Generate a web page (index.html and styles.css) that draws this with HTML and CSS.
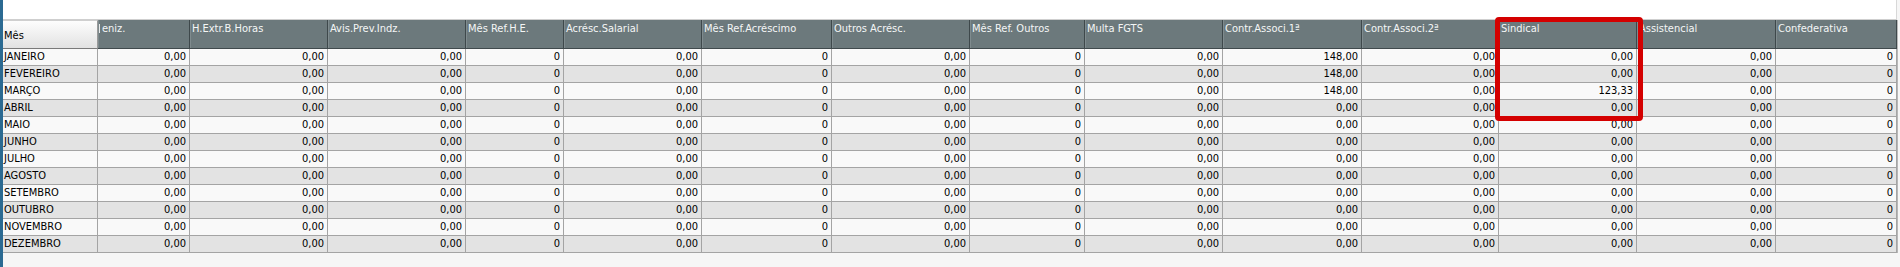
FILE: index.html
```html
<!DOCTYPE html>
<html lang="pt">
<head>
<meta charset="utf-8">
<title>Grade</title>
<link rel="stylesheet" href="styles.css">
</head>
<body>
<div class="frame">
  <div class="topbar"></div>
  <div class="grid">
    <div class="hd hd-first">Mês</div>
    <div class="hd hd-cut">eniz.</div>
    <div class="hd">H.Extr.B.Horas</div>
    <div class="hd">Avis.Prev.Indz.</div>
    <div class="hd">Mês Ref.H.E.</div>
    <div class="hd">Acrésc.Salarial</div>
    <div class="hd">Mês Ref.Acréscimo</div>
    <div class="hd">Outros Acrésc.</div>
    <div class="hd">Mês Ref. Outros</div>
    <div class="hd">Multa FGTS</div>
    <div class="hd">Contr.Associ.1ª</div>
    <div class="hd">Contr.Associ.2ª</div>
    <div class="hd">Sindical</div>
    <div class="hd">Assistencial</div>
    <div class="hd">Confederativa</div>

    <div class="c m">JANEIRO</div><div class="c">0,00</div><div class="c">0,00</div><div class="c">0,00</div><div class="c">0</div><div class="c">0,00</div><div class="c">0</div><div class="c">0,00</div><div class="c">0</div><div class="c">0,00</div><div class="c">148,00</div><div class="c">0,00</div><div class="c">0,00</div><div class="c">0,00</div><div class="c">0</div>
    <div class="c m alt">FEVEREIRO</div><div class="c alt">0,00</div><div class="c alt">0,00</div><div class="c alt">0,00</div><div class="c alt">0</div><div class="c alt">0,00</div><div class="c alt">0</div><div class="c alt">0,00</div><div class="c alt">0</div><div class="c alt">0,00</div><div class="c alt">148,00</div><div class="c alt">0,00</div><div class="c alt">0,00</div><div class="c alt">0,00</div><div class="c alt">0</div>
    <div class="c m">MARÇO</div><div class="c">0,00</div><div class="c">0,00</div><div class="c">0,00</div><div class="c">0</div><div class="c">0,00</div><div class="c">0</div><div class="c">0,00</div><div class="c">0</div><div class="c">0,00</div><div class="c">148,00</div><div class="c">0,00</div><div class="c">123,33</div><div class="c">0,00</div><div class="c">0</div>
    <div class="c m alt">ABRIL</div><div class="c alt">0,00</div><div class="c alt">0,00</div><div class="c alt">0,00</div><div class="c alt">0</div><div class="c alt">0,00</div><div class="c alt">0</div><div class="c alt">0,00</div><div class="c alt">0</div><div class="c alt">0,00</div><div class="c alt">0,00</div><div class="c alt">0,00</div><div class="c alt">0,00</div><div class="c alt">0,00</div><div class="c alt">0</div>
    <div class="c m">MAIO</div><div class="c">0,00</div><div class="c">0,00</div><div class="c">0,00</div><div class="c">0</div><div class="c">0,00</div><div class="c">0</div><div class="c">0,00</div><div class="c">0</div><div class="c">0,00</div><div class="c">0,00</div><div class="c">0,00</div><div class="c">0,00</div><div class="c">0,00</div><div class="c">0</div>
    <div class="c m alt">JUNHO</div><div class="c alt">0,00</div><div class="c alt">0,00</div><div class="c alt">0,00</div><div class="c alt">0</div><div class="c alt">0,00</div><div class="c alt">0</div><div class="c alt">0,00</div><div class="c alt">0</div><div class="c alt">0,00</div><div class="c alt">0,00</div><div class="c alt">0,00</div><div class="c alt">0,00</div><div class="c alt">0,00</div><div class="c alt">0</div>
    <div class="c m">JULHO</div><div class="c">0,00</div><div class="c">0,00</div><div class="c">0,00</div><div class="c">0</div><div class="c">0,00</div><div class="c">0</div><div class="c">0,00</div><div class="c">0</div><div class="c">0,00</div><div class="c">0,00</div><div class="c">0,00</div><div class="c">0,00</div><div class="c">0,00</div><div class="c">0</div>
    <div class="c m alt">AGOSTO</div><div class="c alt">0,00</div><div class="c alt">0,00</div><div class="c alt">0,00</div><div class="c alt">0</div><div class="c alt">0,00</div><div class="c alt">0</div><div class="c alt">0,00</div><div class="c alt">0</div><div class="c alt">0,00</div><div class="c alt">0,00</div><div class="c alt">0,00</div><div class="c alt">0,00</div><div class="c alt">0,00</div><div class="c alt">0</div>
    <div class="c m">SETEMBRO</div><div class="c">0,00</div><div class="c">0,00</div><div class="c">0,00</div><div class="c">0</div><div class="c">0,00</div><div class="c">0</div><div class="c">0,00</div><div class="c">0</div><div class="c">0,00</div><div class="c">0,00</div><div class="c">0,00</div><div class="c">0,00</div><div class="c">0,00</div><div class="c">0</div>
    <div class="c m alt">OUTUBRO</div><div class="c alt">0,00</div><div class="c alt">0,00</div><div class="c alt">0,00</div><div class="c alt">0</div><div class="c alt">0,00</div><div class="c alt">0</div><div class="c alt">0,00</div><div class="c alt">0</div><div class="c alt">0,00</div><div class="c alt">0,00</div><div class="c alt">0,00</div><div class="c alt">0,00</div><div class="c alt">0,00</div><div class="c alt">0</div>
    <div class="c m">NOVEMBRO</div><div class="c">0,00</div><div class="c">0,00</div><div class="c">0,00</div><div class="c">0</div><div class="c">0,00</div><div class="c">0</div><div class="c">0,00</div><div class="c">0</div><div class="c">0,00</div><div class="c">0,00</div><div class="c">0,00</div><div class="c">0,00</div><div class="c">0,00</div><div class="c">0</div>
    <div class="c m alt">DEZEMBRO</div><div class="c alt">0,00</div><div class="c alt">0,00</div><div class="c alt">0,00</div><div class="c alt">0</div><div class="c alt">0,00</div><div class="c alt">0</div><div class="c alt">0,00</div><div class="c alt">0</div><div class="c alt">0,00</div><div class="c alt">0,00</div><div class="c alt">0,00</div><div class="c alt">0,00</div><div class="c alt">0,00</div><div class="c alt">0</div>
  </div>
  <div class="highlight"></div>
</div>
</body>
</html>
```

FILE: styles.css
```css
html, body {
  margin: 0;
  padding: 0;
}
body {
  width: 1900px;
  height: 267px;
  overflow: hidden;
  background: #f6f6f6;
  font-family: "DejaVu Sans Condensed", "DejaVu Sans", "Liberation Sans", sans-serif;
  font-stretch: condensed;
  font-size: 11px;
  color: #000;
}
.frame {
  position: relative;
  height: 267px;
  border-left: 3px solid #2b6a92;
  box-sizing: border-box;
}
.topbar {
  height: 20px;
  width: 1894px;
  background: #ffffff;
  border-bottom: 1px solid #cfcfcf;
  border-right: 1px solid #d8d8d8;
  box-sizing: border-box;
}
.grid {
  display: grid;
  grid-template-columns: 95px 92px 138px 138px 98px 138px 130px 138px 115px 138px 139px 137px 138px 139px 121px;
  grid-template-rows: 29px repeat(12, 17px);
  width: 1894px;
  border-right: 1px solid #b8b8b8;
}
.hd {
  box-sizing: border-box;
  background: #6c797c;
  color: #f4f6f6;
  padding: 2px 2px 0 2px;
  line-height: 13px;
  white-space: nowrap;
  overflow: hidden;
  border-right: 1px solid #3e484b;
  border-bottom: 1px solid #404a4d;
  box-shadow: inset 1px 0 0 #7f8b8e;
}
.hd-first {
  background: linear-gradient(#fdfdfd, #e2e2e2);
  color: #000;
  display: flex;
  align-items: center;
  padding: 2px 1px 0 1px;
  border-right: 1px solid #9a9a9a;
  border-bottom: 1px solid #7a7a7a;
  border-top: 1px solid #cfcfcf;
  box-shadow: none;
}
.hd-cut {
  padding-left: 4px;
  position: relative;
}
.hd-cut::before {
  content: "";
  position: absolute;
  left: 1px;
  top: 4px;
  width: 1px;
  height: 9px;
  background: #e8eaea;
}
.c {
  box-sizing: border-box;
  background: #f9f9f9;
  border-right: 1px solid #a4a4a4;
  border-bottom: 1px solid #a4a4a4;
  text-align: right;
  padding: 0 3px 0 2px;
  line-height: 16px;
  white-space: nowrap;
  overflow: hidden;
}
.c.alt {
  background: #e3e3e3;
}
.c.m {
  text-align: left;
  padding-left: 1px;
}
.highlight {
  position: absolute;
  left: 1492px;
  top: 17px;
  width: 148px;
  height: 104px;
  box-sizing: border-box;
  border: 5px solid #d40000;
  border-radius: 4px;
}
```
